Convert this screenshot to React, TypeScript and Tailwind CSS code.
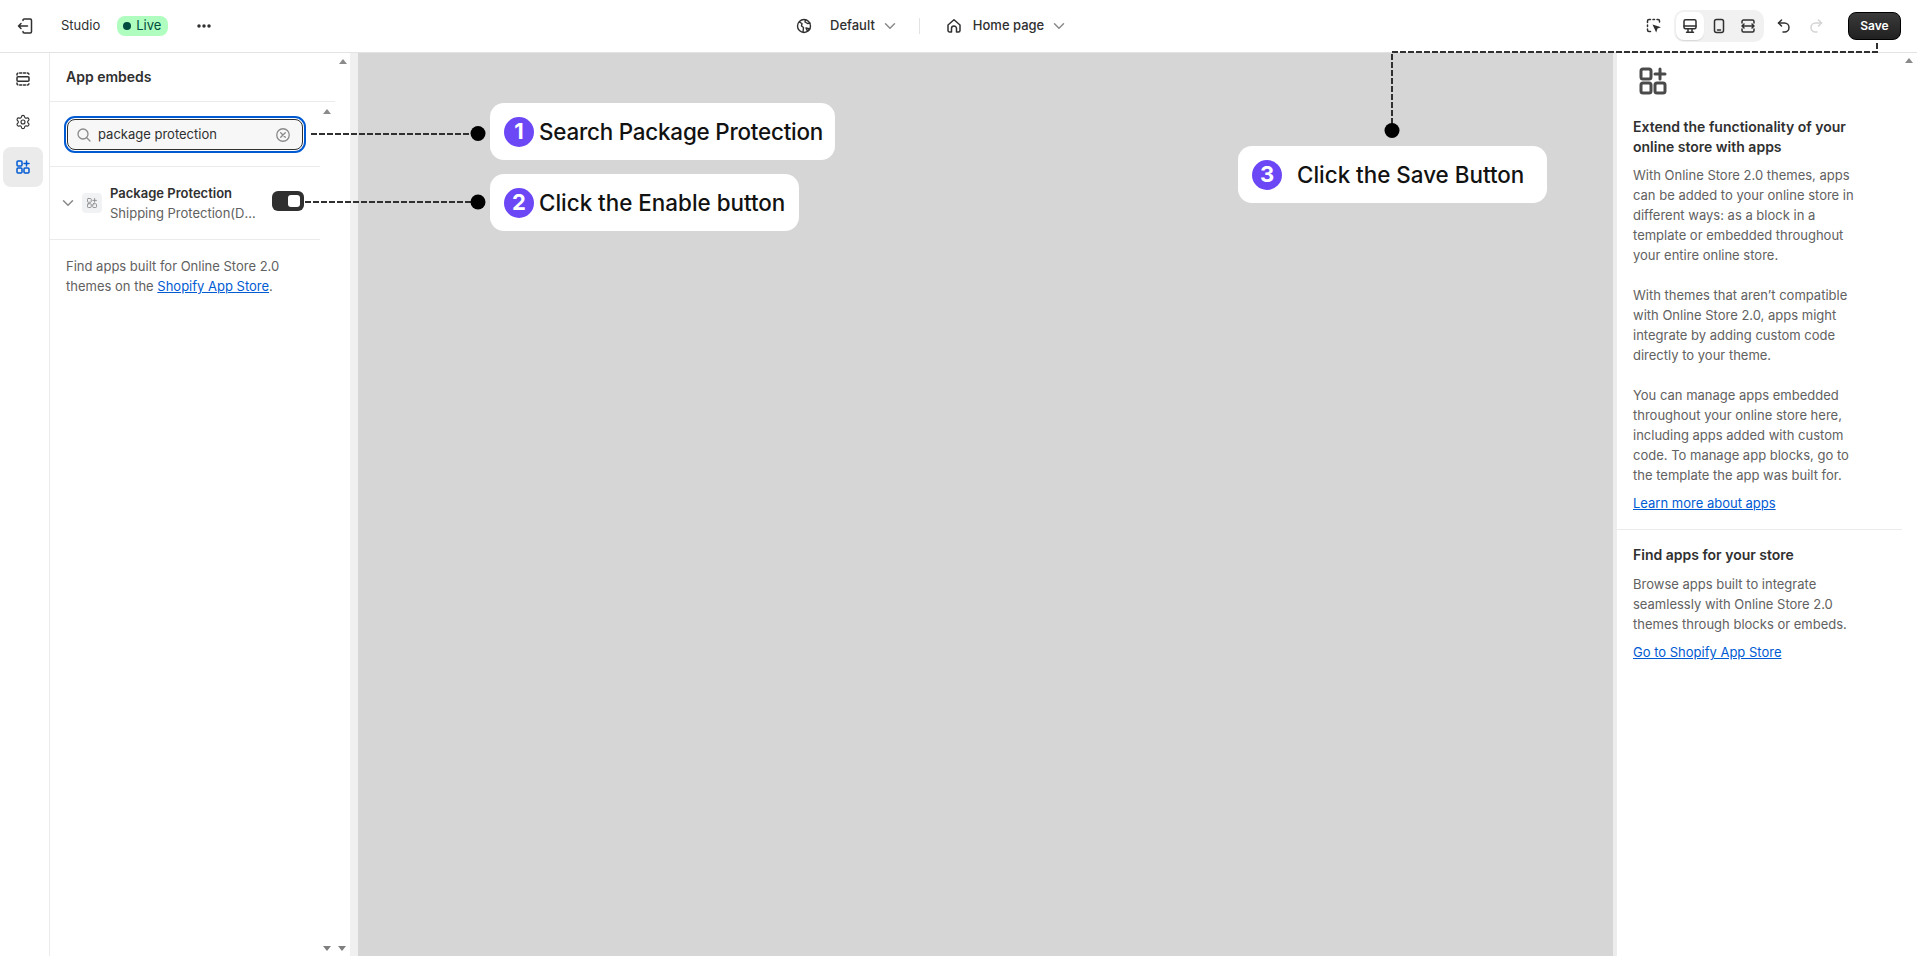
import { Settings } from "lucide-react";

const ICON = "fill-none stroke-current";

function ExitIcon() {
    return (
        <svg width="20" height="20" viewBox="0 0 20 20" className={`${ICON} text-[#303030]`} strokeWidth="1.5" strokeLinecap="round" strokeLinejoin="round">
            <path d="M8 4.5V4.2c0-.7.5-1.2 1.2-1.2h6.1c.7 0 1.2.5 1.2 1.2v11.6c0 .7-.5 1.2-1.2 1.2H9.2C8.500 17 8 16.500 8 15.800v-.3" />
            <path d="M12.500 10H3.500M6 7.500 3.500 10 6 12.500" />
        </svg>
    );
}

function Chevron({ className = "text-[#8a8a8a]" }: { className?: string }) {
    return (
        <svg width="16" height="16" viewBox="0 0 16 16" className={`${ICON} ${className}`} strokeWidth="1.5" strokeLinecap="round" strokeLinejoin="round">
            <path d="m3.500 5.750 4.500 4.500 4.500-4.500" />
        </svg>
    );
}

function AppsIcon({ size = 16, width = 1.5, className = "" }: { size?: number; width?: number; className?: string }) {
    return (
        <svg width={size} height={size} viewBox="0 0 16 16" className={`${ICON} ${className}`} strokeWidth={width} strokeLinecap="round" strokeLinejoin="round">
            <rect x="2" y="2" width="5" height="5" rx="1" />
            <rect x="2" y="9" width="5" height="5" rx="1" />
            <rect x="9" y="9" width="5" height="5" rx="1" />
            <path d="M11.500 2v5M9 4.500h5" />
        </svg>
    );
}

function SectionsIcon() {
    return (
        <svg width="16" height="16" viewBox="0 0 16 16" className={`${ICON} text-[#303030]`} strokeWidth="1.500" strokeLinecap="round">
            <rect x="2" y="5.800" width="12" height="4.400" rx="1" />
            <path d="M2 4V3.500C2 2.700 2.700 2 3.500 2h9c.8 0 1.500.7 1.500 1.500V4M2 12v.5c0 .8.7 1.500 1.500 1.500h9c.8 0 1.500-.7 1.500-1.500V12" strokeDasharray="2 1.800" />
        </svg>
    );
}

function GlobeIcon() {
    return (
        <svg width="16" height="16" viewBox="0 0 16 16" className={`${ICON} text-[#303030]`} strokeWidth="1.400" strokeLinejoin="round">
            <circle cx="8" cy="8" r="6.500" />
            <path d="M3 3.800 6 5.500 5.500 8l2 1.500-.5 4.800M9.500 1.700 9 4l2.500 1.500 3-.5M10 10l3.800 1-2.300 2.300z" />
        </svg>
    );
}

function HomeIcon() {
    return (
        <svg width="16" height="16" viewBox="0 0 16 16" className={`${ICON} text-[#303030]`} strokeWidth="1.500" strokeLinejoin="round">
            <path d="M2 7 8 1.800 14 7v5.500c0 .8-.7 1.500-1.500 1.500h-2V10.500a2.500 2.500 0 0 0-5 0V14h-2C2.700 14 2 13.300 2 12.500z" />
        </svg>
    );
}

function InspectIcon() {
    return (
        <svg width="16" height="16" viewBox="0 0 16 16" className="text-[#303030]">
            <path d="M1.500 4.500V3c0-.8.7-1.500 1.500-1.500h1.500M7 1.500h1.500M11 1.500h1c.8 0 1.500.7 1.500 1.500v1M1.500 7v1.500M1.500 11v1c0 .8.7 1.500 1.500 1.500h1.500" fill="none" stroke="currentColor" strokeWidth="1.500" strokeLinecap="round" />
            <path d="m6.500 6.500 8.500 2.800-3.500 1.300-1.300 3.900z" fill="currentColor" />
        </svg>
    );
}

function DesktopIcon() {
    return (
        <svg width="16" height="16" viewBox="0 0 16 16" className={`${ICON} text-[#303030]`} strokeWidth="1.500" strokeLinecap="round" strokeLinejoin="round">
            <rect x="2" y="1.800" width="12" height="9" rx="1.500" />
            <path d="M2 8h12M6 11v3M10 11v3M4.500 14.200h7" />
        </svg>
    );
}

function MobileIcon() {
    return (
        <svg width="16" height="16" viewBox="0 0 16 16" className={`${ICON} text-[#303030]`} strokeWidth="1.500" strokeLinecap="round">
            <rect x="3.500" y="1.500" width="9" height="13" rx="2" />
            <path d="M6.500 12h3" />
        </svg>
    );
}

function FullWidthIcon() {
    return (
        <svg width="16" height="16" viewBox="0 0 16 16" className={`${ICON} text-[#303030]`} strokeWidth="1.500" strokeLinecap="round" strokeLinejoin="round">
            <path d="M2 5V3.500C2 2.700 2.700 2 3.500 2h9c.8 0 1.500.7 1.500 1.500V5M2 11v1.500c0 .8.7 1.500 1.500 1.500h9c.8 0 1.500-.7 1.500-1.500V11" />
            <path d="M2 8h12M4 6 2 8l2 2M12 6l2 2-2 2" />
        </svg>
    );
}

function UndoIcon({ className }: { className: string }) {
    return (
        <svg width="16" height="16" viewBox="0 0 16 16" className={`${ICON} ${className}`} strokeWidth="1.500" strokeLinecap="round" strokeLinejoin="round">
            <path d="M5.500 2 2.500 5l3 3" />
            <path d="M2.500 5h6a4.500 4.500 0 0 1 0 9H7" />
        </svg>
    );
}

function MoreIcon() {
    return (
        <svg width="14" height="4" viewBox="0 0 14 4" className="fill-[#303030]">
            <circle cx="2" cy="2" r="1.750" />
            <circle cx="7" cy="2" r="1.750" />
            <circle cx="12" cy="2" r="1.750" />
        </svg>
    );
}

function ScrollArrow({ down = false }: { down?: boolean }) {
    return (
        <div
            className={`h-0 w-0 border-x-[4px] border-x-transparent ${down ? "border-t-[5px] border-t-[#7f7f7f]" : "border-b-[5px] border-b-[#8a8a8a]"}`}
        />
    );
}

function Callout({ n, text, className }: { n: number; text: string; className: string }) {
    return (
        <div className={`absolute flex h-[57px] items-center rounded-[14px] bg-white text-[22.4px] font-medium text-[#121212] ${className}`}>
            <span className="flex h-[30px] w-[30px] shrink-0 items-center justify-center rounded-full bg-[#6c47f5] text-[22px] font-bold text-white">
                {n}
            </span>
            <span className="whitespace-nowrap">{text}</span>
        </div>
    );
}

function Connectors() {
    return (
        <svg width="1917" height="956" viewBox="0 0 1917 956" className="pointer-events-none absolute top-0 left-0">
            <g fill="none" stroke="#303030" strokeWidth="2" strokeDasharray="6 2">
                <path d="M311 134H472" />
                <path d="M305 202H472" />
                <path d="M1392 124V52H1877V42" />
            </g>
            <circle cx="478" cy="133.500" r="7.500" fill="#000" />
            <circle cx="478" cy="202" r="7.500" fill="#000" />
            <circle cx="1392" cy="130.500" r="7.500" fill="#000" />
        </svg>
    );
}

function LeftRail() {
    return (
        <div className="flex w-[50px] shrink-0 flex-col items-center gap-1 border-r border-[#ebebeb] pt-[6px] pr-[3px]">
            <button className="flex h-10 w-10 items-center justify-center rounded-lg"><SectionsIcon /></button>
            <button className="flex h-10 w-10 items-center justify-center rounded-lg">
                <Settings size={16} strokeWidth={1.7} className="-mt-[2px] text-[#303030]" />
            </button>
            <button className="flex h-10 w-10 items-center justify-center rounded-lg bg-[#ebebeb]">
                <AppsIcon className="text-[#005bd3]" />
            </button>
        </div>
    );
}

function AppPanel() {
    return (
        <div className="flex w-[300px] shrink-0 flex-col">
            <div className="flex">
                <div className="w-[285px]">
                    <div className="flex h-[49px] items-center border-b border-[#ebebeb] pl-4 text-sm font-semibold text-[#303030]">App embeds</div>
                </div>
                <div className="flex flex-1 justify-center pt-[6px]"><ScrollArrow /></div>
            </div>
            <div className="flex flex-1 flex-col">
                <div className="relative w-[270px] border-b border-[#ebebeb] px-[14px] pt-[14px] pb-[13px]">
                    <div className="absolute top-[7px] left-[273px]"><ScrollArrow /></div>
                    <div className="rounded-[11px] border-2 border-[#005bd3] bg-white p-px">
                        <div className="flex h-[31px] items-center rounded-lg border border-[#303030] bg-[#f7f7f7] px-2 text-[13px] text-[#303030]">
                            <svg width="16" height="16" viewBox="0 0 16 16" className={`${ICON} text-[#8a8a8a]`} strokeWidth="1.300" strokeLinecap="round">
                                <circle cx="7" cy="7" r="5" />
                                <path d="m11 11 3 3" />
                            </svg>
                            <span className="ml-[6px] flex-1">package protection</span>
                            <svg width="16" height="16" viewBox="0 0 16 16" className={`${ICON} mr-[3px] text-[#8a8a8a]`} strokeWidth="1.300" strokeLinecap="round">
                                <circle cx="8" cy="8" r="6.250" />
                                <path d="m5.700 5.700 4.600 4.600M10.300 5.700l-4.600 4.600" />
                            </svg>
                        </div>
                    </div>
                </div>
                <div className="flex h-[73px] w-[270px] items-center border-b border-[#ebebeb] pl-[10px]">
                    <Chevron />
                    <div className="ml-[6px] flex h-5 w-5 items-center justify-center rounded bg-[#f1f2f4]">
                        <AppsIcon size={12} width={1.200} className="text-[#8a8a8a]" />
                    </div>
                    <div className="ml-2 w-[162px] text-[13px] leading-5">
                        <div className="font-semibold text-[#303030]">Package Protection</div>
                        <div className="w-[150px] truncate text-[#616161]">Shipping Protection(Default)</div>
                    </div>
                    <div className="-mt-1 flex h-5 w-8 items-center justify-end rounded-md bg-[#303030] pr-1">
                        <div className="h-3 w-3 rounded-[3px] bg-white" />
                    </div>
                </div>
                <p className="mt-4 w-[240px] box-content pl-4 text-[13px] leading-5 text-[#616161]">
                    Find apps built for Online Store 2.0 themes on the{" "}
                    <a className="text-[#005bd3] underline">Shopify App Store</a>.
                </p>
                <div className="mt-auto flex justify-end gap-[7px] pr-[4px] pb-[5px]">
                    <ScrollArrow down />
                    <ScrollArrow down />
                </div>
            </div>
        </div>
    );
}

function InfoPanel() {
    return (
        <div className="relative w-[300px] shrink-0 bg-white text-[13px] leading-5 text-[#616161]">
            <div className="absolute top-[5px] right-[4px]"><ScrollArrow /></div>
            <div className="w-[285px] border-b border-[#ebebeb] px-4 pt-[12px] pb-[16px]">
                <AppsIcon size={32} width={1.500} className="ml-1 text-[#4a4a4a]" />
                <h2 className="mt-[20px] w-[236px] text-sm font-semibold text-[#303030]">Extend the functionality of your online store with apps</h2>
                <p className="mt-2 w-[236px]">With Online Store 2.0 themes, apps can be added to your online store in different ways: as a block in a template or embedded throughout your entire online store.</p>
                <p className="mt-5 w-[236px]">With themes that aren’t compatible with Online Store 2.0, apps might integrate by adding custom code directly to your theme.</p>
                <p className="mt-5 w-[236px]">You can manage apps embedded throughout your online store here, including apps added with custom code. To manage app blocks, go to the template the app was built for.</p>
                <a className="mt-2 block text-[#005bd3] underline">Learn more about apps</a>
            </div>
            <div className="w-[285px] px-4 pt-[15px]">
                <h2 className="text-sm font-semibold text-[#303030]">Find apps for your store</h2>
                <p className="mt-[9px] w-[236px]">Browse apps built to integrate seamlessly with Online Store 2.0 themes through blocks or embeds.</p>
                <a className="mt-2 block text-[#005bd3] underline">Go to Shopify App Store</a>
            </div>
        </div>
    );
}

export default function App() {
    return (
        <div className="relative flex h-[956px] w-[1917px] flex-col overflow-hidden bg-white font-['Inter',sans-serif]">
            <header className="flex h-[53px] shrink-0 items-center border-b border-[#e3e3e3] text-[13px] text-[#303030]">
                <div className="flex w-[786px] shrink-0 items-center pl-[15px]">
                    <ExitIcon />
                    <span className="ml-[26px]">Studio</span>
                    <span className="ml-[17px] flex h-5 w-[51px] items-center gap-[5px] rounded-lg bg-[#affebf] pl-[6px] text-[#014b40]">
                        <span className="h-2 w-2 rounded-full bg-[#014b40]" />
                        Live
                    </span>
                    <span className="ml-[29px]"><MoreIcon /></span>
                </div>
                <div className="flex items-center font-medium">
                    <span className="ml-[10px]"><GlobeIcon /></span>
                    <span className="ml-[18px]">Default</span>
                    <Chevron className="ml-[7px] text-[#8a8a8a]" />
                    <span className="ml-[21px] h-4 w-px bg-[#e3e3e3]" />
                    <span className="ml-[26px]"><HomeIcon /></span>
                    <span className="ml-[11px]">Home page</span>
                    <Chevron className="ml-[7px] text-[#8a8a8a]" />
                </div>
                <div className="ml-auto flex items-center pr-4">
                    <InspectIcon />
                    <div className="ml-3 flex h-8 w-[90px] items-center rounded-[10px] bg-[#f1f1f1] p-[2px]">
                        <span className="flex h-7 w-7 items-center justify-center rounded-lg bg-white shadow-[0_1px_1px_rgba(0,0,0,0.1)]"><DesktopIcon /></span>
                        <span className="flex h-7 w-[29px] items-center justify-center"><MobileIcon /></span>
                        <span className="flex h-7 w-[29px] items-center justify-center"><FullWidthIcon /></span>
                    </div>
                    <span className="ml-3"><UndoIcon className="text-[#303030]" /></span>
                    <span className="ml-4 -scale-x-100"><UndoIcon className="text-[#d4d4d4]" /></span>
                    <button className="ml-[24px] flex h-7 w-[53px] items-center justify-center rounded-lg border border-black bg-gradient-to-b from-[#3a3a3a] to-[#212121] text-xs font-semibold text-white">
                        Save
                    </button>
                </div>
            </header>
            <main className="flex min-h-0 flex-1">
                <LeftRail />
                <AppPanel />
                <div className="w-2 shrink-0 bg-[#f0f0f0]" />
                <div className="flex-1 bg-[#d6d6d6]" />
                <div className="w-1 shrink-0 bg-[#ededed]" />
                <InfoPanel />
            </main>
            <Connectors />
            <Callout n={1} text="Search Package Protection" className="top-[103px] left-[490px] w-[345px] gap-[5px] pl-[14px] tracking-[-0.2px]" />
            <Callout n={2} text="Click the Enable button" className="top-[174px] left-[490px] w-[309px] gap-[5px] pl-[14px]" />
            <Callout n={3} text="Click the Save Button" className="top-[146px] left-[1238px] w-[309px] gap-[15px] pl-[14px]" />
        </div>
    );
}
